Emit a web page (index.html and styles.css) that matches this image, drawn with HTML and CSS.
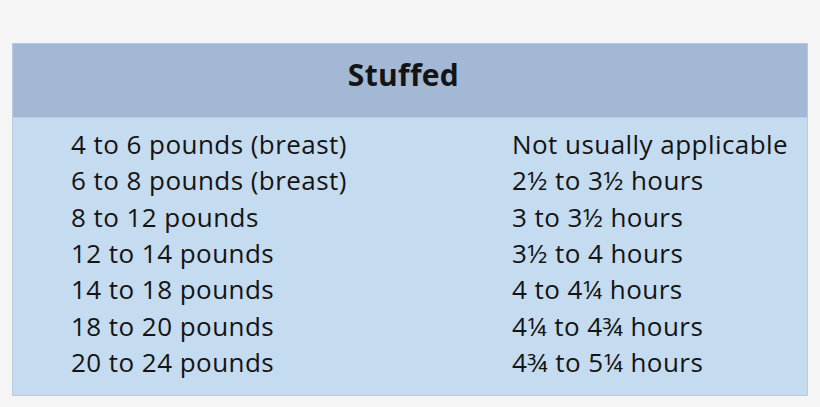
FILE: index.html
```html
<!DOCTYPE html>
<html>
<head>
<meta charset="utf-8">
<link rel="stylesheet" href="styles.css">
</head>
<body>
<div class="table">
  <div class="head">Stuffed</div>
  <div class="body">
    <div class="row"><span class="c1">4 to 6 pounds (breast)</span><span class="c2">Not usually applicable</span></div>
    <div class="row"><span class="c1">6 to 8 pounds (breast)</span><span class="c2">2½ to 3½ hours</span></div>
    <div class="row"><span class="c1">8 to 12 pounds</span><span class="c2">3 to 3½ hours</span></div>
    <div class="row"><span class="c1">12 to 14 pounds</span><span class="c2">3½ to 4 hours</span></div>
    <div class="row"><span class="c1">14 to 18 pounds</span><span class="c2">4 to 4¼ hours</span></div>
    <div class="row"><span class="c1">18 to 20 pounds</span><span class="c2">4¼ to 4¾ hours</span></div>
    <div class="row"><span class="c1">20 to 24 pounds</span><span class="c2">4¾ to 5¼ hours</span></div>
  </div>
</div>
</body>
</html>
```
FILE: styles.css
```css
html, body {
  margin: 0;
  padding: 0;
  background: #f5f5f5;
  width: 820px;
  height: 407px;
  overflow: hidden;
}
body {
  padding: 43px 12px 0 12px;
  box-sizing: border-box;
  font-family: "Open Sans", "Liberation Sans", sans-serif;
  color: #141414;
}
.table {
  width: 796px;
  border: 1px solid #b6cbe2;
  box-sizing: border-box;
}
.head {
  height: 74px;
  box-sizing: border-box;
  padding-bottom: 13px;
  padding-right: 13px;
  background: #a3b8d4;
  display: flex;
  align-items: center;
  justify-content: center;
  font-weight: 700;
  font-size: 30px;
  letter-spacing: 0.3px;
  border-bottom: 1px solid #b8cde3;
}
.body {
  background: #c5dbef;
  padding: 8px 0 15px 0;
}
.row {
  display: flex;
  height: 36.3px;
  align-items: center;
  font-size: 26px;
  letter-spacing: 0.45px;
}
.c1 {
  width: 499px;
  padding-left: 58px;
  box-sizing: border-box;
}
.c2 {
  flex: 1;
}
```
